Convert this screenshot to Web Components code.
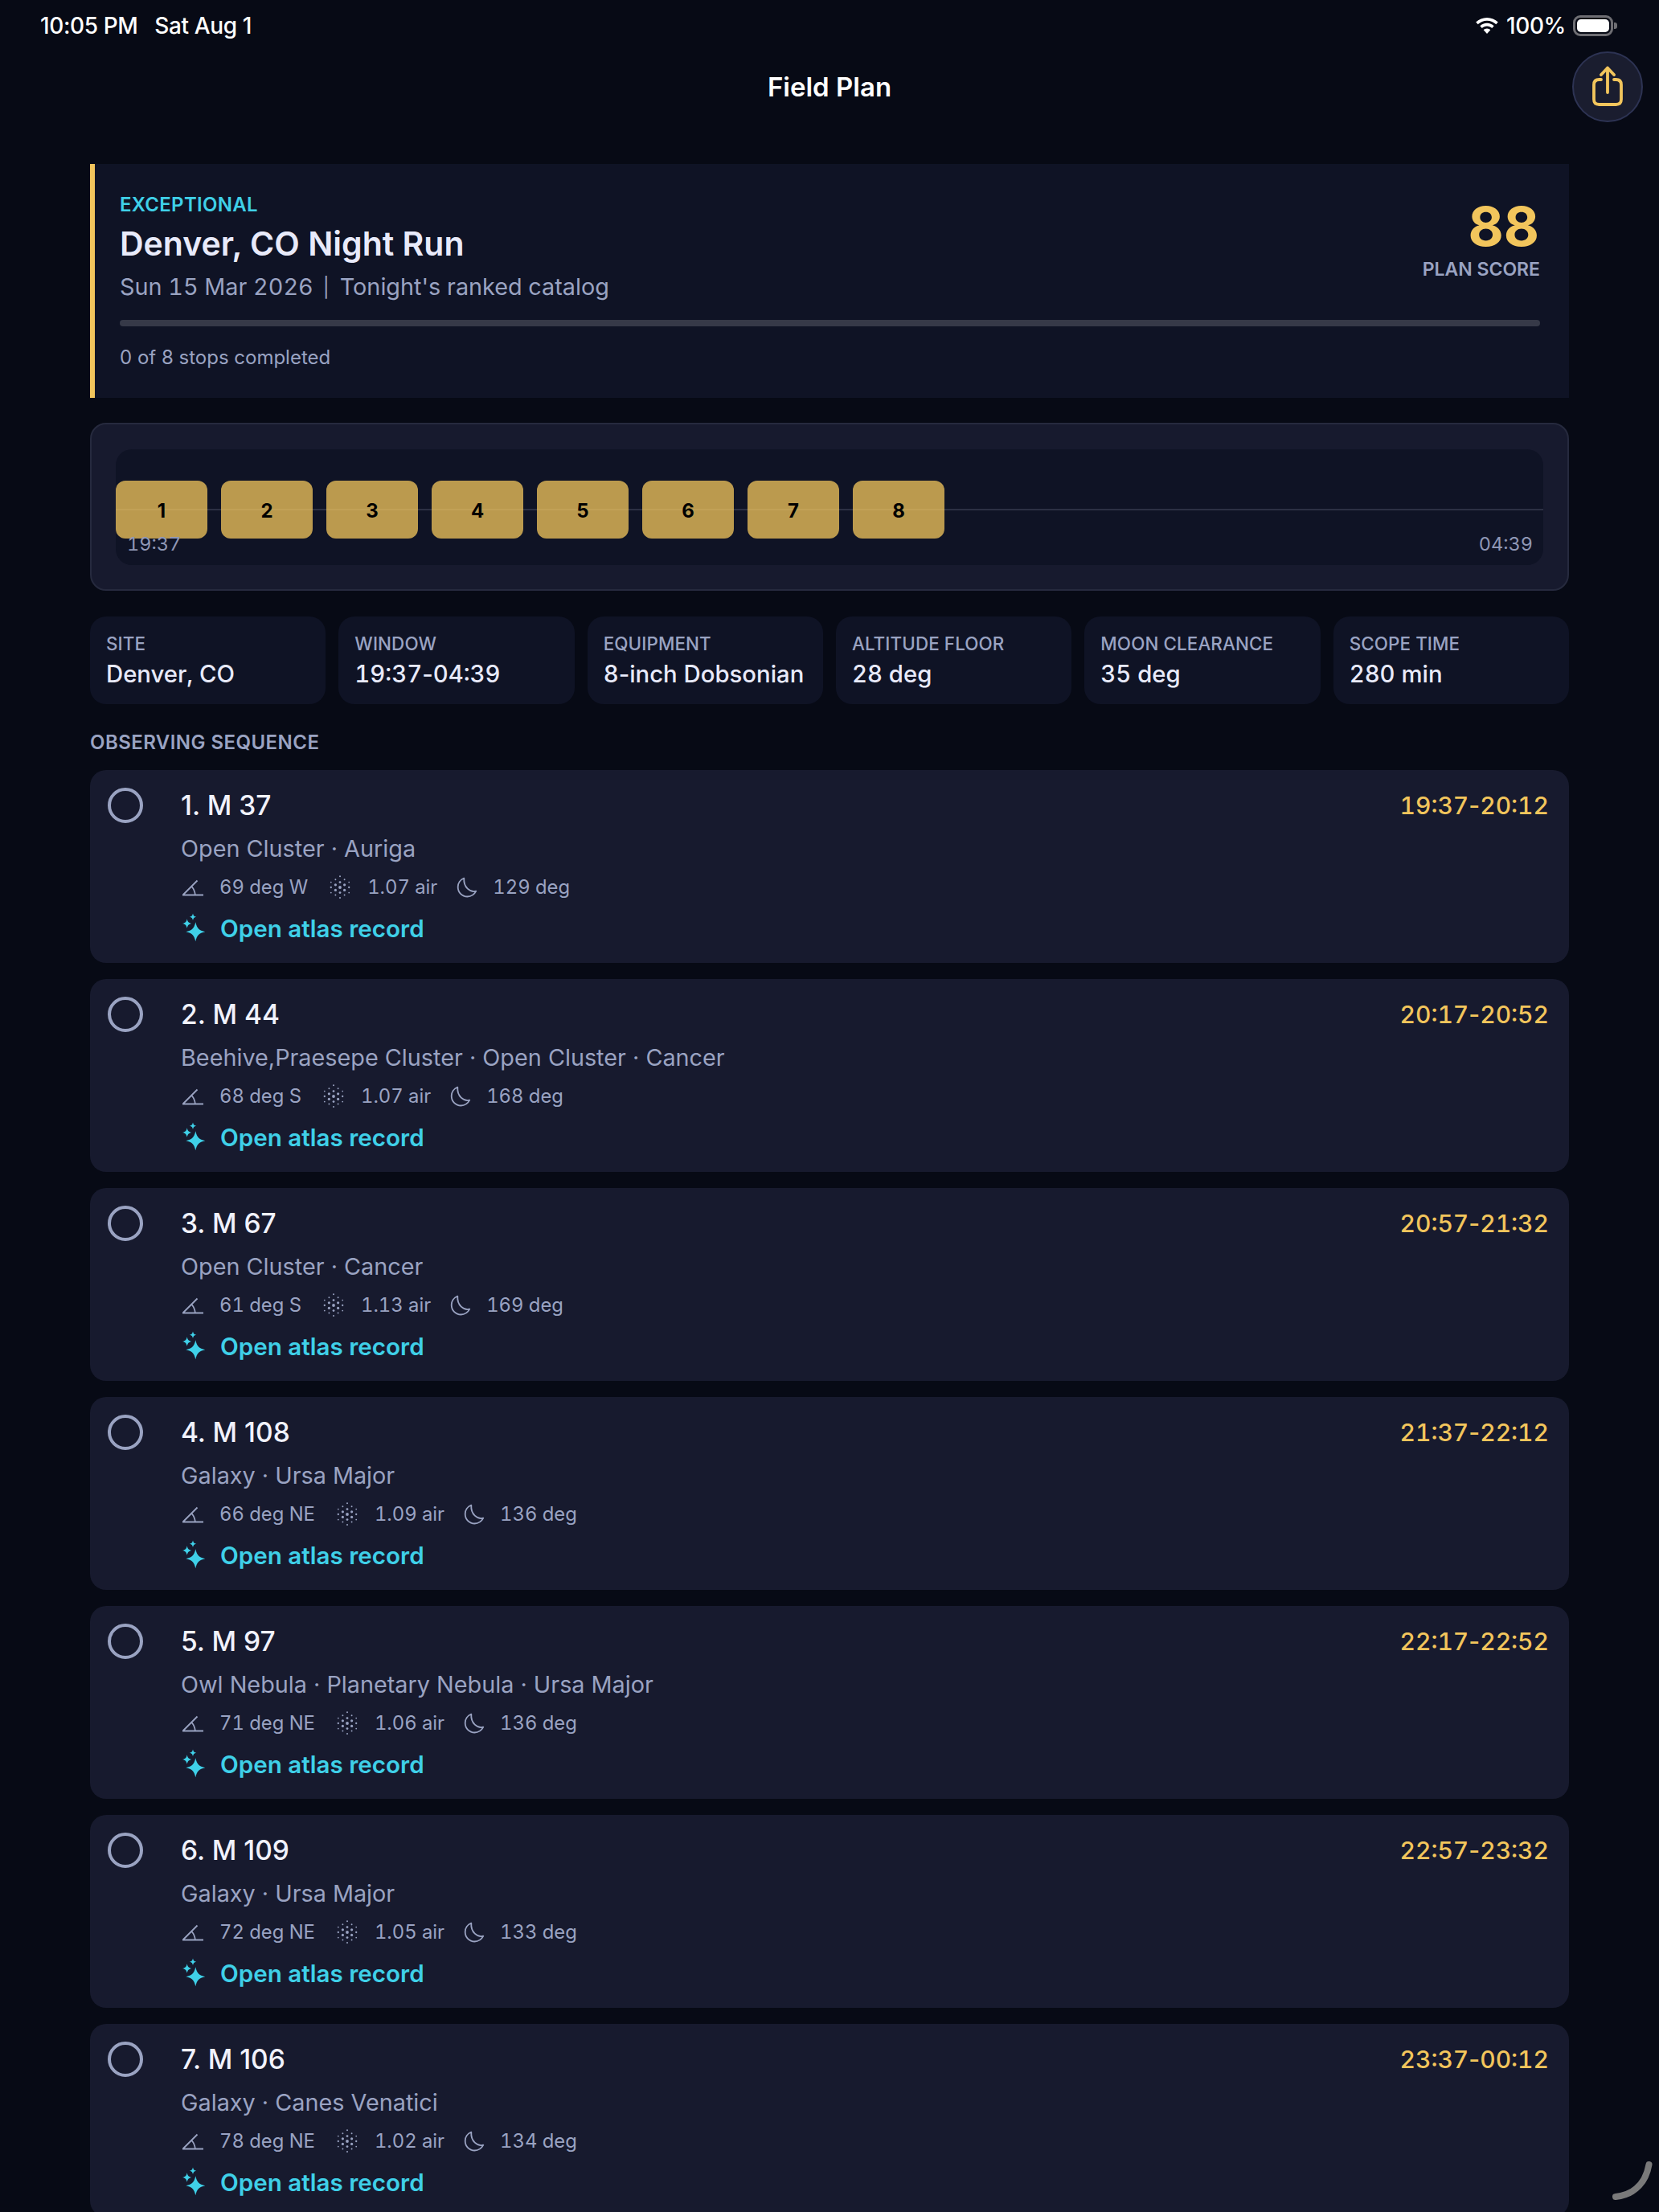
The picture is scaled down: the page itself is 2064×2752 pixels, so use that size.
<!doctype html>
<html><head><meta charset="utf-8">
<style>
html,body{margin:0;padding:0;background:#070a15;height:2752px;overflow:hidden}
body{font-family:Inter,"Liberation Sans",sans-serif;position:relative}
</style></head><body>
<app-page></app-page>
<script>
const F='font-family:Inter,"Liberation Sans",sans-serif;';
const hy=s=>s.replace('-','<span class="hy">-</span>');
function dots(){const D=[[0,-13.7,1],[0,-6.4,1.4],[0,0,1.9],[0,6.6,1.4],[0,13,1],
 [-5.6,-9.7,.95],[-5.6,-3.2,1.6],[-5.6,3.4,1.6],[-5.6,9.5,.95],[5.6,-9.7,.95],[5.6,-3.2,1.6],[5.6,3.4,1.6],[5.6,9.5,.95],
 [-11.2,-6.4,.9],[-11.2,0,1.15],[-11.2,6.6,.9],[11.2,-6.4,.9],[11.2,0,1.15],[11.2,6.6,.9]];
 return D.map(([x,y,r])=>`<circle cx="${13+x}" cy="${15+y}" r="${r}"/>`).join('')}
function star(x,y,r){const k=.16*r,c=(a,b)=>`${(x+a).toFixed(2)} ${(y+b).toFixed(2)}`;
 return `M${c(0,-r)}C${c(k,-k*2.1)} ${c(k*2.1,-k)} ${c(r,0)}C${c(k*2.1,k)} ${c(k,k*2.1)} ${c(0,r)}C${c(-k,k*2.1)} ${c(-k*2.1,k)} ${c(-r,0)}C${c(-k*2.1,-k)} ${c(-k,-k*2.1)} ${c(0,-r)}Z`}
const ICONS={
 angle:`<svg width="28" height="22" viewBox="0 0 28 22" fill="none" stroke="currentColor" stroke-width="1.8"><path d="M2 20.500H28M2.500 20.500L20.500 2.500M13.500 10c2.500 2.800 4 6.500 4.400 10.500"/></svg>`,
 air:`<svg width="26" height="30" viewBox="0 0 26 30" fill="currentColor">${dots()}</svg>`,
 moon:`<svg width="26" height="28" viewBox="0 0 26 28" fill="none" stroke="currentColor" stroke-width="1.8" stroke-linejoin="round"><path d="M9.300 2.700C4.500 4.500 1.700 9 1.700 13.500 1.700 20.500 7 25.500 13.500 25.500 18 25.500 22 23 24.300 18.700 17 20.500 8.500 14 9.300 2.700Z"/></svg>`,
 spark:`<svg width="32" height="38" viewBox="0 0 32 38" fill="currentColor"><path d="${star(18.3,23.3,12)}${star(7.700,13,5.800)}${star(15,4.700,4.200)}"/></svg>`,
 share:`<svg width="44" height="50" viewBox="0 0 44 50" fill="none" stroke="#f2c55c" stroke-width="3.800" stroke-linecap="round" stroke-linejoin="round"><path d="M14 17H11.500C7 17 5 19 5 23.500V41.500C5 46 7 48 11.500 48H32.500C37 48 39 46 39 41.500V23.500C39 19 37 17 32.500 17H30"/><path d="M22 33V2.500M14 11L22 2.500 30 11"/></svg>`,
 wifi:`<svg width="28" height="20" viewBox="0 0 28 20" fill="#fff"><path d="M14 0C8.700 0 3.800 2.100.2 5.600L2.700 8.300C5.700 5.400 9.600 3.700 14 3.700s8.300 1.700 11.300 4.600l2.500-2.700C24.200 2.100 19.300 0 14 0z"/><path d="M14 6.800c-3.300 0-6.400 1.300-8.700 3.500l2.500 2.700c1.600-1.600 3.800-2.500 6.200-2.500s4.600.9 6.200 2.500l2.500-2.700c-2.300-2.200-5.400-3.500-8.700-3.500z"/><path d="M14 13.500c-1.700 0-3.200.7-4.300 1.800L14 20l4.300-4.700c-1.100-1.100-2.600-1.800-4.300-1.800z"/></svg>`
};
function def(name,css,html){
 customElements.define(name,class extends HTMLElement{
  constructor(){super();const r=this.attachShadow({mode:'open'});
   const get=k=>this.getAttribute(k)||'';
   r.innerHTML=`<style>${css}</style>`+(typeof html==='function'?html(get,this):html)}
 })
}
def('status-bar',`:host{display:flex;align-items:center;height:64px;padding:0 52px 0 50px;color:#fff;font-size:28px;letter-spacing:-.4px;font-weight:500;${F}box-sizing:border-box}
 .r{margin-left:auto;display:flex;align-items:center;gap:9px}.d{margin-left:21px}
 .r svg{margin-right:1px}
 .bat{position:relative;width:50px;height:26px;border:3px solid #6e6e73;border-radius:9px;box-sizing:border-box;padding:2px}
 .bat i{display:block;height:100%;background:#fff;border-radius:5px}
 .nub{width:4px;height:8px;background:#6e6e73;border-radius:0 3px 3px 0;margin-left:-8px}`,
 `<span>10:05 PM</span><span class="d">Sat Aug 1</span><div class="r">${ICONS.wifi}<span>100%</span><div class="bat"><i></i></div><div class="nub"></div></div>`);
def('nav-bar',`:host{display:flex;align-items:center;justify-content:center;position:relative;height:88px;color:#fff;font-size:33px;font-weight:600;${F}}
 button{position:absolute;right:20px;top:0;width:88px;height:88px;border-radius:50%;background:#1a1d2f;border:2px solid #2d3353;padding:0;display:flex;align-items:center;justify-content:center;box-sizing:border-box}
 svg{margin-top:-3px}`,
 `<span>Field Plan</span><button aria-label="Share">${ICONS.share}</button>`);
def('hero-card',`:host{display:block;background:#0f1325;border-left:6px solid #f2c55c;padding:30px 36px 0 31px;height:291px;box-sizing:border-box;${F}}
 .top{display:flex;justify-content:space-between}
 .eb{color:#3fd0e8;font-size:24px;font-weight:600;letter-spacing:.3px;line-height:30px;margin-top:6px}
 h1{margin:6px 0 0;color:#e8eafa;font-size:41px;font-weight:600;line-height:54px}
 .sub{color:#9aa3c2;font-size:28.8px;line-height:40px;margin-top:7px;font-variant-numeric:tabular-nums}
 .p{font-size:24px;margin:0 13px 0 12px;position:relative;top:-1px}
 .sc{text-align:right}
 .n{color:#f2c55c;font-size:68px;font-weight:700;line-height:80px;margin-top:7px;margin-right:1px}
 .l{color:#9aa3c2;font-size:23px;font-weight:600;line-height:30px;margin-top:-1px}
 .bar{height:8px;border-radius:4px;background:#363948;margin-top:19px}
 .st{color:#9aa3c2;font-size:24px;line-height:32px;margin-top:23px}`,
 g=>`<div class="top"><div><div class="eb">EXCEPTIONAL</div><h1>Denver, CO Night Run</h1><div class="sub">Sun 15 Mar 2026<span class="p">|</span>Tonight's ranked catalog</div></div><div class="sc"><div class="n">88</div><div class="l">PLAN SCORE</div></div></div><div class="bar"></div><div class="st">0 of 8 stops completed</div>`);
def('time-line',`:host{display:block;background:#171a2e;border:2px solid #262a3e;border-radius:20px;padding:31px 30px 30px;${F}}
 .track{position:relative;height:144px;background:#0f1325;border-radius:20px}
 .line{position:absolute;left:0;right:0;top:74px;height:2px;background:#2c3043}
 .chips{position:relative;display:flex;gap:17px;padding-top:39px}
 .t{position:absolute;top:102px;color:#8f97b5;font-size:23.5px;line-height:32px;font-variant-numeric:tabular-nums}
 .a{left:14px}.b{right:13px}`,
 ()=>`<div class="track"><div class="line"></div><div class="chips">${[1,2,3,4,5,6,7,8].map(n=>`<slot name="c${n}"></slot>`).join('')}</div><span class="t a">19:37</span><span class="t b">04:39</span></div>`);
def('stop-chip',`:host{display:flex;align-items:center;justify-content:center;width:114px;height:72px;border-radius:12px;background:rgba(242,197,92,.76);color:#000;font-size:24px;font-weight:700;padding-top:2px;box-sizing:border-box;${F}}`,`<slot></slot>`);
def('stat-card',`:host{display:block;background:#0f1325;border-radius:20px;padding:19px 20px;height:109px;box-sizing:border-box;min-width:0;${F}}
 .l{color:#9aa3c2;font-size:22.4px;font-weight:500;line-height:30px;letter-spacing:.1px;white-space:nowrap}
 .v{color:#e8eafa;font-size:29.3px;font-weight:500;line-height:40px;margin-top:3px;white-space:nowrap;font-variant-numeric:tabular-nums}
 .hy{font-variant-numeric:normal}`,
 g=>`<div class="l">${g('label')}</div><div class="v">${hy(g('value'))}</div>`);
def('stop-card',`:host{display:flex;height:240px;background:#171a2e;border-radius:20px;box-sizing:border-box;padding:22px 25px 0 22px;flex:none;${F}}
 .c{width:44px;height:44px;border-radius:50%;border:4px solid #9aa3c2;box-sizing:border-box;flex:none;margin-right:47px}
 .m{flex:1;min-width:0}
 .hd{display:flex;justify-content:space-between;align-items:flex-start}
 h3{margin:0;color:#f1f2fc;font-size:33.5px;font-weight:500;line-height:44px}
 .tm{color:#f2c55c;font-size:30px;font-weight:550;line-height:44px;font-variant-numeric:tabular-nums}
 .hy{font-variant-numeric:normal}
 .s{color:#9aa3c2;font-size:28.8px;line-height:40px;margin-top:12px}
 .meta{display:flex;align-items:center;color:#9aa3c2;font-size:23.8px;line-height:34px;margin-top:11px;font-variant-numeric:tabular-nums}
 .meta svg{flex:none}
 .meta>*:nth-child(1){margin-right:20px}.meta>*:nth-child(2){margin-right:27px}.meta>*:nth-child(3){margin-right:21px}.meta>*:nth-child(4){margin-right:24px}.meta>*:nth-child(5){margin-right:19px}
 .link{display:flex;align-items:center;color:#3fd0e8;font-size:29.6px;font-weight:600;line-height:40px;margin-top:14px}
 .link svg{margin-right:17px}`,
 g=>`<div class="c"></div><div class="m"><div class="hd"><h3>${g('name')}</h3><div class="tm">${hy(g('time'))}</div></div><div class="s">${g('sub')}</div><div class="meta">${ICONS.angle}<span>${g('alt')}</span>${ICONS.air}<span>${g('air')}</span>${ICONS.moon}<span>${g('moon')}</span></div><div class="link">${ICONS.spark}Open atlas record</div></div>`);
def('cursor-arc',`:host{position:absolute;right:4px;bottom:8px;width:56px;height:56px;display:block}`,
 `<svg width="56" height="56" viewBox="0 0 56 56" fill="none"><path d="M47.500 5C44 25 32 42 6 45" stroke="#7a7a7a" stroke-width="8" stroke-linecap="round"/></svg>`);
const stats=[['SITE','Denver, CO'],['WINDOW','19:37-04:39'],['EQUIPMENT','8-inch Dobsonian'],['ALTITUDE FLOOR','28 deg'],['MOON CLEARANCE','35 deg'],['SCOPE TIME','280 min']];
const stops=[['1. M 37','19:37-20:12','Open Cluster · Auriga','69 deg W','1.07 air','129 deg'],
['2. M 44','20:17-20:52','Beehive,Praesepe Cluster · Open Cluster · Cancer','68 deg S','1.07 air','168 deg'],
['3. M 67','20:57-21:32','Open Cluster · Cancer','61 deg S','1.13 air','169 deg'],
['4. M 108','21:37-22:12','Galaxy · Ursa Major','66 deg NE','1.09 air','136 deg'],
['5. M 97','22:17-22:52','Owl Nebula · Planetary Nebula · Ursa Major','71 deg NE','1.06 air','136 deg'],
['6. M 109','22:57-23:32','Galaxy · Ursa Major','72 deg NE','1.05 air','133 deg'],
['7. M 106','23:37-00:12','Galaxy · Canes Venatici','78 deg NE','1.02 air','134 deg']];
def('app-page',`:host{display:block;height:2752px;overflow:hidden;position:relative;background:#070a15;${F}}
 main{padding:52px 112px 0;display:flex;flex-direction:column}
 .tl{margin-top:31px}
 .stats{display:grid;grid-template-columns:repeat(6,minmax(0,1fr));gap:16px;margin-top:32px}
 h2{margin:33px 0 0;color:#9aa3c2;font-size:24px;font-weight:600;letter-spacing:.45px;line-height:30px}
 .list{display:flex;flex-direction:column;gap:20px;margin-top:19px}`,
 ()=>`<status-bar></status-bar><nav-bar></nav-bar><main><hero-card></hero-card><time-line class="tl">${[1,2,3,4,5,6,7,8].map(n=>`<stop-chip slot="c${n}">${n}</stop-chip>`).join('')}</time-line><div class="stats">${stats.map(s=>`<stat-card label="${s[0]}" value="${s[1]}"></stat-card>`).join('')}</div><h2>OBSERVING SEQUENCE</h2><div class="list">${stops.map(s=>`<stop-card name="${s[0]}" time="${s[1]}" sub="${s[2]}" alt="${s[3]}" air="${s[4]}" moon="${s[5]}"></stop-card>`).join('')}</div></main><cursor-arc></cursor-arc>`);
</script>
</body></html>
